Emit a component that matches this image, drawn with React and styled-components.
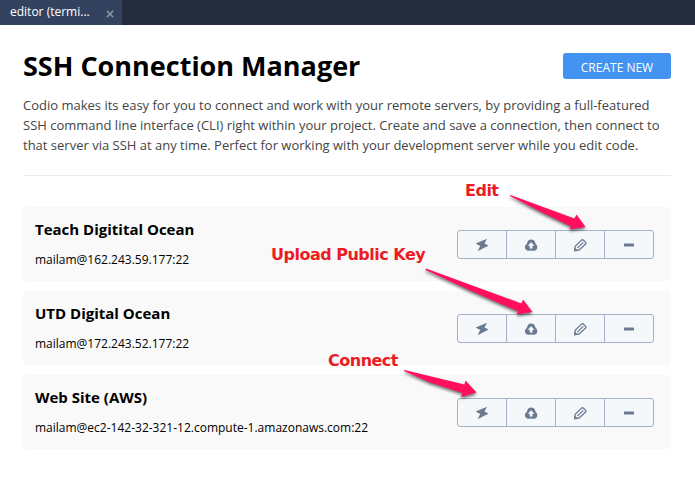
import React from "react";
import styled, { createGlobalStyle } from "styled-components";

const GlobalStyle = createGlobalStyle`
  body { margin: 0; background: #fff; font-family: "Open Sans", sans-serif; color: #000; }
  * { box-sizing: border-box; }
`;

const Page = styled.div`
  position: relative;
  width: 695px;
  height: 485px;
  overflow: hidden;
`;

const TabBar = styled.div`
  display: flex;
  height: 25px;
  background: #222c3c;
`;

const Tab = styled.div`
  display: flex;
  align-items: center;
  justify-content: space-between;
  width: 122px;
  padding: 0 8px 1px 10px;
  background: #33435f;
  color: #fff;
  font-size: 12px;
  line-height: 24px;
  white-space: nowrap;
`;

const CloseIcon = styled.svg`
  width: 8px;
  height: 8px;
  margin-top: 3px;
  stroke: #8791a0;
  stroke-width: 1.7;
`;

const Content = styled.main`
  padding: 25px 24px 0 23px;
`;

const Header = styled.header`
  display: flex;
  justify-content: space-between;
  align-items: flex-start;
  height: 45px;
`;

const Title = styled.h1`
  margin: -3px 0 0;
  font-size: 27px;
  line-height: 38px;
  font-weight: 700;
  white-space: nowrap;
`;

const CreateButton = styled.button`
  width: 108px;
  height: 26px;
  margin-top: 3px;
  padding: 3px 0 0;
  border: 0;
  border-radius: 3px;
  background: #4393f0;
  color: #fff;
  font: 12px/23px "Open Sans", sans-serif;
`;

const Intro = styled.p`
  height: 81px;
  margin: 0;
  border-bottom: 1px solid #eaeaea;
  color: #444;
  font-size: 13px;
  line-height: 20px;
  white-space: nowrap;
`;

const List = styled.div`
  display: flex;
  flex-direction: column;
  gap: 10px;
  margin-top: 31px;
`;

const Card = styled.section`
  display: flex;
  justify-content: space-between;
  height: 74px;
  padding: 11px 17px 0 12px;
  border-radius: 4px;
  background: #f9f9f9;
`;

const Name = styled.h2`
  margin: 0;
  font-size: 15px;
  line-height: 22px;
  font-weight: 700;
`;

const Address = styled.div`
  margin-top: 11px;
  font-size: 12px;
  line-height: 18px;
`;

const ButtonGroup = styled.div`
  display: flex;
  width: 197px;
  height: 29px;
  margin-top: 12px;
  border: 1px solid #a6b0c8;
  border-radius: 3px;
  background: #f5f8fa;
`;

const IconButton = styled.button`
  display: flex;
  flex: 1;
  align-items: center;
  justify-content: center;
  padding: 1px 0 0;
  border: 0;
  border-left: ${(p) => (p.$first ? "0" : "1px solid #a6b0c8")};
  background: transparent;
  color: #6b7a93;
`;

const Glyph = styled.svg`
  width: 14px;
  height: 14px;
  display: block;
`;

const Note = styled.span`
  position: absolute;
  left: ${(p) => p.$x}px;
  top: ${(p) => p.$y}px;
  color: #ed1c24;
  font: 700 16px/20px "DejaVu Sans", Verdana, sans-serif;
  letter-spacing: -0.5px;
  white-space: nowrap;
`;

const Arrows = styled.svg`
  position: absolute;
  inset: 0;
  width: 695px;
  height: 485px;
  pointer-events: none;
  fill: #ff0f5c;
  filter: drop-shadow(0.5px 2.5px 1.5px rgba(0, 0, 0, 0.55));
`;

const BoltIcon = () => (
  <Glyph viewBox="0 0 14 14">
    <path fill="currentColor" d="M12 .8 .7 5.4 5.200 8 2.600 13.200 13.700 7.600 9.500 5.600z" />
  </Glyph>
);

const UploadIcon = () => (
  <Glyph viewBox="0 0 14 14">
    <path
      fill="currentColor"
      fillRule="evenodd"
      d="M7.200 1.400c2.200 0 3.500 1.300 3.900 3 .2.800.5 1.400 1.200 2.100.7.800 1 1.600 1 2.500 0 2.200-1.400 3.800-3.300 3.800-1 0-1.700-.4-2.800-.4s-1.700.4-2.700.4C2.400 12.800.9 11.200.9 9.100c0-1 .4-1.800 1.100-2.500.8-.8 1.100-1.300 1.300-2.200C3.800 2.700 5 1.400 7.200 1.400zM7.100 4.200 3.700 7.700h2v2.700h2.800V7.700h2z"
    />
  </Glyph>
);

const PencilIcon = () => (
  <Glyph viewBox="0 0 14 14" fill="none" stroke="currentColor" strokeWidth="1.300" strokeLinejoin="round">
    <path d="M1.600 12.600 2.200 8.200 8.600 2.100Q9.500 1.300 10.500 2.200L12.500 4.200q.9.900.1 1.800L6.100 12z" />
    <path d="M4.300 10.100 10.300 4.400" strokeWidth="1.300" />
    <path d="M.9 13.400 1.600 9.600 4.900 12.600z" fill="currentColor" stroke="none" />
  </Glyph>
);

const MinusIcon = () => (
  <Glyph viewBox="0 0 14 14">
    <rect x="2" y="5.500" width="10" height="3" rx=".5" fill="currentColor" />
  </Glyph>
);

const actions = [
  { label: "Connect", Icon: BoltIcon },
  { label: "Upload Public Key", Icon: UploadIcon },
  { label: "Edit", Icon: PencilIcon },
  { label: "Remove", Icon: MinusIcon },
];

const connections = [
  { name: "Teach Digitital Ocean", address: "mailam@162.243.59.177:22" },
  { name: "UTD Digital Ocean", address: "mailam@172.243.52.177:22" },
  { name: "Web Site (AWS)", address: "mailam@ec2-142-32-321-12.compute-1.amazonaws.com:22" },
];

export default function App() {
  return (
    <Page>
      <GlobalStyle />
      <TabBar>
        <Tab>
          <span>editor (termi...</span>
          <CloseIcon viewBox="0 0 9 9"><path d="M1 1l7 7M8 1 1 8" /></CloseIcon>
        </Tab>
      </TabBar>
      <Content>
        <Header>
          <Title>SSH Connection Manager</Title>
          <CreateButton>CREATE NEW</CreateButton>
        </Header>
        <Intro>
          Codio makes its easy for you to connect and work with your remote servers, by providing a full-featured
          <br />
          SSH command line interface (CLI) right within your project. Create and save a connection, then connect to
          <br />
          that server via SSH at any time. Perfect for working with your development server while you edit code.
        </Intro>
        <List>
          {connections.map((c) => (
            <Card key={c.name}>
              <div>
                <Name>{c.name}</Name>
                <Address>{c.address}</Address>
              </div>
              <ButtonGroup>
                {actions.map(({ label, Icon }, i) => (
                  <IconButton key={label} aria-label={label} $first={i === 0}>
                    <Icon />
                  </IconButton>
                ))}
              </ButtonGroup>
            </Card>
          ))}
        </List>
      </Content>
      <Arrows viewBox="0 0 695 485">
        <path d="M510.500 195 574.500 218.500 576.500 214.500 585.500 227 569.500 229.500 571 226.500 543 213 510 196z" />
        <path d="M426 268.500 521.500 303.500 523 299.500 532.500 312 516.500 314.500 518.500 311.500 470 290.500 425.500 270z" />
        <path d="M404.500 370 464.500 384.500 465.500 380.500 476.500 392.500 461 397 462.500 393 430 382.500 404 371z" />
      </Arrows>
      <Note $x={465} $y={181}>Edit</Note>
      <Note $x={271} $y={245}>Upload Public Key</Note>
      <Note $x={328} $y={351}>Connect</Note>
    </Page>
  );
}
